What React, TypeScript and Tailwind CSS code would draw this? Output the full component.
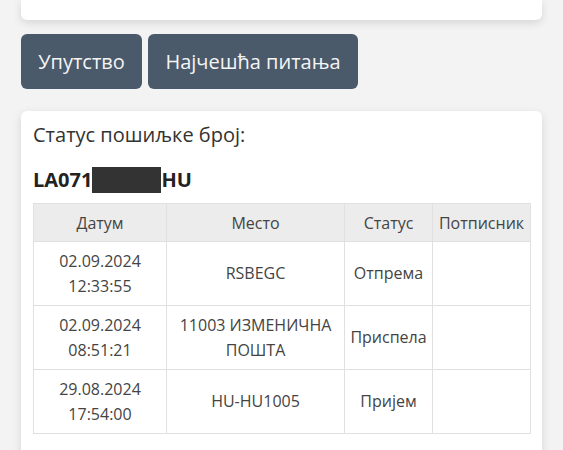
import React from "react";

const rows = [
  { d: "02.09.2024", t: "12:33:55", place: ["RSBEGC"], status: "Отпрема" },
  { d: "02.09.2024", t: "08:51:21", place: ["11003 ИЗМЕНИЧНА", "ПОШТА"], status: "Приспела" },
  { d: "29.08.2024", t: "17:54:00", place: ["HU-HU1005"], status: "Пријем" },
];

export default function App() {
  return (
    <div className="h-[450px] bg-[#f3f3f3] font-['Open_Sans',sans-serif] pl-[21px] pr-[21px] overflow-hidden">
      <div className="h-[20px] bg-white rounded-b-md shadow-[0_3px_8px_rgba(0,0,0,0.12)]" />
      <div className="flex gap-[6px] mt-[14px]">
        <button className="h-[55px] w-[121px] rounded-md bg-[#4b5a6a] text-[20px] text-[#f4f4f4]">Упутство</button>
        <button className="h-[55px] w-[210px] rounded-md bg-[#4b5a6a] text-[20px] text-[#f4f4f4]">Најчешћа питања</button>
      </div>
      <div className="mt-[22px] bg-white rounded-md shadow-[0_3px_10px_rgba(0,0,0,0.12)] px-[12px] pt-[9px] pb-[40px]">
        <div className="text-[20px] leading-[30px] text-[#333]">Статус пошиљке број:</div>
        <div className="mt-[17px] flex items-center text-[20px] leading-[26px] font-bold text-[#222]">
          <span>LA071</span>
          <span className="inline-block w-[69px] h-[26px] bg-[#333]" />
          <span>HU</span>
        </div>
        <table className="mt-[10px] w-[498px] border-collapse text-[16px] text-[#444] text-center">
          <thead>
            <tr className="bg-[#ececec] h-[38px]">
              <th className="font-normal border border-[#e0e0e0] w-[133px]">Датум</th>
              <th className="font-normal border border-[#e0e0e0] w-[178px]">Место</th>
              <th className="font-normal border border-[#e0e0e0] w-[88px]">Статус</th>
              <th className="font-normal border border-[#e0e0e0]">Потписник</th>
            </tr>
          </thead>
          <tbody>
            {rows.map((r, i) => (
              <tr key={i} className="h-[64px] leading-[25px]">
                <td className="border border-[#e0e0e0]">
                  <div>{r.d}</div>
                  <div>{r.t}</div>
                </td>
                <td className="border border-[#e0e0e0]">
                  {r.place.map((p, j) => (
                    <div key={j}>{p}</div>
                  ))}
                </td>
                <td className="border border-[#e0e0e0]">{r.status}</td>
                <td className="border border-[#e0e0e0]" />
              </tr>
            ))}
          </tbody>
        </table>
      </div>
    </div>
  );
}
